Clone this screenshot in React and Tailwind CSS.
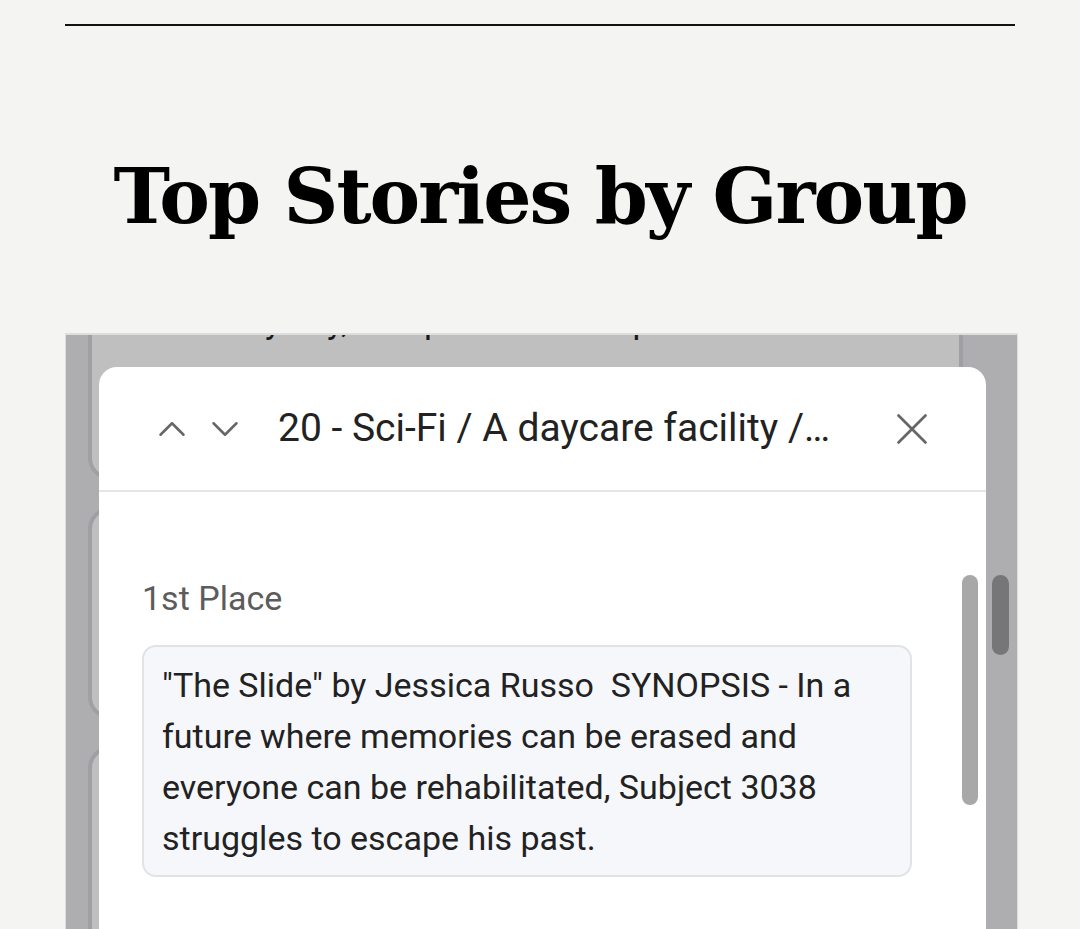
import { ChevronUp, ChevronDown, X } from 'lucide-react';

function BackgroundCard({ className, children }) {
  return (
    <div className={`mx-[22px] rounded-[22px] border-4 border-[#d6d6db] bg-white px-10 text-[34px] leading-[50px] text-[#222] ${className}`}>
      {children}
    </div>
  );
}

export default function App() {
  return (
    <div className="min-h-screen bg-[#f4f4f2] pt-[24px]" style={{ fontFamily: 'Roboto, "Noto Sans", sans-serif' }}>
      {/* rule */}
      <div className="mx-[65px] border-t-2 border-[#111]" />

      {/* heading */}
      <h1
        className="mt-[126px] text-center text-[76px] font-bold leading-[90px] tracking-[-2px] text-black"
        style={{ fontFamily: '"DejaVu Serif", serif' }}
      >
        Top Stories by Group
      </h1>

      {/* embedded page */}
      <div className="relative ml-[65px] mr-[62px] mt-[91px] h-[596px] overflow-hidden border-t-2 border-x border-[#dedede] bg-[#e8e8ed]">
        <div className="-mt-[170px] flex flex-col gap-[27px] pr-[32px]">
          <BackgroundCard className="h-[315px] pt-[127px] pl-[108px]">
            Every day, the quiet town keeps a
          </BackgroundCard>
          <BackgroundCard className="h-[212px]" />
          <BackgroundCard className="h-[212px]" />
        </div>

        {/* iframe scrollbar */}
        <div className="absolute right-[8px] top-[240px] h-[80px] w-[17px] rounded-full bg-[#9e9ea2]" />

        {/* overlay */}
        <div className="absolute inset-0 bg-black/25" />

        {/* modal */}
        <div className="absolute left-[33px] top-[32px] bottom-0 w-[887px] rounded-t-[18px] bg-white">
          <div className="flex h-[125px] items-center border-b-2 border-[#e6e6e6] pl-[50px] pr-[47px]">
            <ChevronUp size={46} strokeWidth={1.3} className="shrink-0 text-[#666]" />
            <ChevronDown size={46} strokeWidth={1.3} className="ml-[7px] shrink-0 text-[#666]" />
            <div className="ml-[30px] flex-1 truncate text-[39px] text-[#222]">
              20 - Sci-Fi / A daycare facility /…
            </div>
            <X size={54} strokeWidth={1.2} className="shrink-0 text-[#666]" />
          </div>

          <div className="pl-[43px] pr-[74px] pt-[88px]">
            <div className="text-[34px] leading-[36px] text-[#5c5c5c]">1st Place</div>
            <div className="mt-[29px] rounded-[14px] border-2 border-[#e2e3e6] bg-[#f6f7fb] px-[18px] pt-[13px] pb-[11px] text-[34px] leading-[51px] text-[#222]">
              "The Slide" by Jessica Russo&nbsp; SYNOPSIS - In a future where memories can be erased and everyone can be rehabilitated, Subject 3038 struggles to escape his past.
            </div>
          </div>

          {/* modal scrollbar */}
          <div className="absolute right-[8px] top-[208px] h-[230px] w-[16px] rounded-full bg-[#a8a8a8]" />
        </div>
      </div>
    </div>
  );
}
